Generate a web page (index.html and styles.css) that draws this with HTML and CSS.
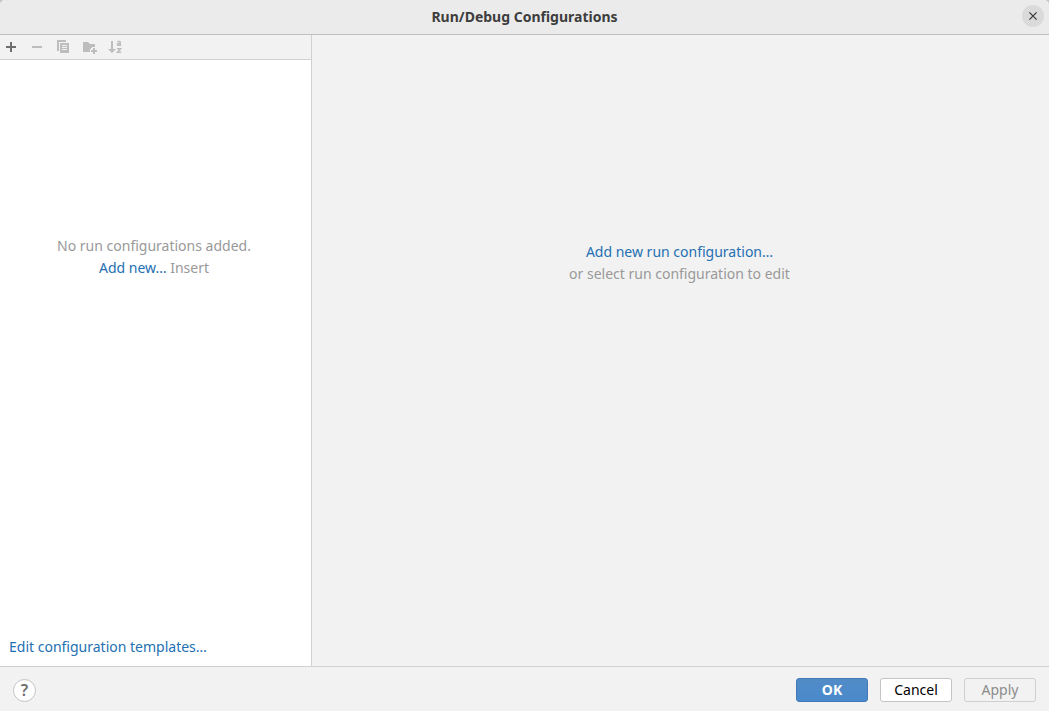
FILE: index.html
```html
<!DOCTYPE html>
<html lang="en">
<head>
<meta charset="utf-8">
<title>Run/Debug Configurations</title>
<link rel="stylesheet" href="styles.css">
</head>
<body>
<div class="dialog">
  <header class="titlebar">
    <h1 class="title">Run/Debug Configurations</h1>
    <button class="close" aria-label="Close">
      <svg width="22" height="22" viewBox="0 0 22 22"><path d="M7.400 7.400l7.200 7.200M14.600 7.400l-7.200 7.200" stroke="#3d3d3d" stroke-width="1.300" fill="none"/></svg>
    </button>
  </header>
  <main class="content">
    <section class="sidebar">
      <div class="toolbar">
        <button class="tool" aria-label="Add"><svg width="16" height="16" viewBox="0 0 16 16"><path d="M7 3h2v4h4v2H9v4H7V9H3V7h4z" fill="#6e6e6e"/></svg></button>
        <button class="tool" aria-label="Remove" disabled><svg width="16" height="16" viewBox="0 0 16 16"><path d="M3 7h10v2H3z" fill="#bdbdbd"/></svg></button>
        <button class="tool" aria-label="Copy" disabled><svg width="16" height="16" viewBox="0 0 16 16"><path d="M2 1h9v2H4v9H2z" fill="#bdbdbd"/><path d="M5 4h9v10H5zM7 6v1h5V6zM7 8v1h5V8zM7 10v1h5v-1z" fill="#bdbdbd" fill-rule="evenodd"/></svg></button>
        <button class="tool" aria-label="New folder" disabled><svg width="16" height="16" viewBox="0 0 16 16"><path d="M2 3h5l2 2h5v4h-4v4H2z" fill="#bdbdbd"/><path d="M12 9h2v2h2v2h-2v2h-2v-2h-2v-2h2z" fill="#bdbdbd" stroke="#f2f2f2" stroke-width="2" paint-order="stroke"/></svg></button>
        <button class="tool" aria-label="Sort" disabled><svg width="16" height="16" viewBox="0 0 16 16"><path d="M4 2h2v8h3l-4 4-4-4h3z" fill="#bdbdbd"/><path d="M10.300 2.800Q13.300 1.800 13.300 3.500V7M13.300 4.500H12Q10.300 4.700 10.300 5.600Q11 7 13.300 5.800M10 9.700h3.600L10.500 13.300H14.200" fill="none" stroke="#bdbdbd" stroke-width="1.500"/></svg></button>
      </div>
      <div class="list">
        <p class="line">No run configurations added.</p>
        <p class="line"><a class="link" href="#">Add new…</a> Insert</p>
      </div>
      <a class="link templates" href="#">Edit configuration templates…</a>
    </section>
    <section class="details">
      <p class="line"><a class="link" href="#">Add new run configuration…</a></p>
      <p class="line">or select run configuration to edit</p>
    </section>
  </main>
  <footer class="footer">
    <button class="help" aria-label="Help">?</button>
    <div class="actions">
      <button class="button primary">OK</button>
      <button class="button">Cancel</button>
      <button class="button" disabled>Apply</button>
    </div>
  </footer>
</div>
</body>
</html>
```
FILE: styles.css
```css
* { box-sizing: border-box; }
html { background: #c4c4c4; }
body { margin: 0; font: 14px/22px "Noto Sans", sans-serif; color: #999; }
button { font: inherit; padding: 0; border: 0; background: none; }
.dialog { display: flex; flex-direction: column; min-height: 100vh; background: #f2f2f2; border-radius: 5px 5px 0 0; overflow: hidden; }
.titlebar { display: grid; grid-template-columns: 22px 1fr 22px; align-items: center; height: 35px; padding: 0 5px 3px; background: #ebebeb; border-bottom: 1px solid #bfbfbf; }
.title { grid-column: 2; margin: 0; padding-top: 2px; font-size: 14px; line-height: 22px; font-weight: 700; text-align: center; color: #3d3d3d; }
.close { display: flex; width: 22px; height: 22px; border-radius: 50%; background: #dadada; }
.content { display: flex; flex: 1; }
.sidebar { display: flex; flex-direction: column; width: 312px; background: #fff; border-right: 1px solid #d1d1d1; }
.toolbar { display: flex; gap: 10px; height: 25px; padding: 4px 3px; background: #f2f2f2; border-bottom: 1px solid #d1d1d1; }
.tool { display: flex; width: 16px; height: 16px; }
.list { flex: 1; padding: 175px 3px 0 0; text-align: center; }
.line { margin: 0; }
.link { color: #2470b3; text-decoration: none; }
.templates { padding: 0 9px 8px; }
.details { flex: 1; padding: 206px 2px 0 0; text-align: center; }
.footer { display: flex; align-items: center; justify-content: space-between; height: 45px; padding: 2px 13px 0; border-top: 1px solid #d1d1d1; }
.help { width: 23px; height: 23px; border: 1px solid #c4c4c4; border-radius: 50%; background: #fff; color: #6e6e6e; font-size: 16px; line-height: 21px; font-weight: 600; }
.actions { display: flex; gap: 12px; }
.button { width: 72px; height: 24px; border: 1px solid #c4c4c4; border-radius: 3px; background: #fff; color: #000; }
.button:disabled { background: #f2f2f2; border-color: #cfcfcf; color: #8c8c8c; }
.primary { background: linear-gradient(#528cc7, #4989cc); border-color: #4278b3; color: #fff; font-weight: 700; }
```
